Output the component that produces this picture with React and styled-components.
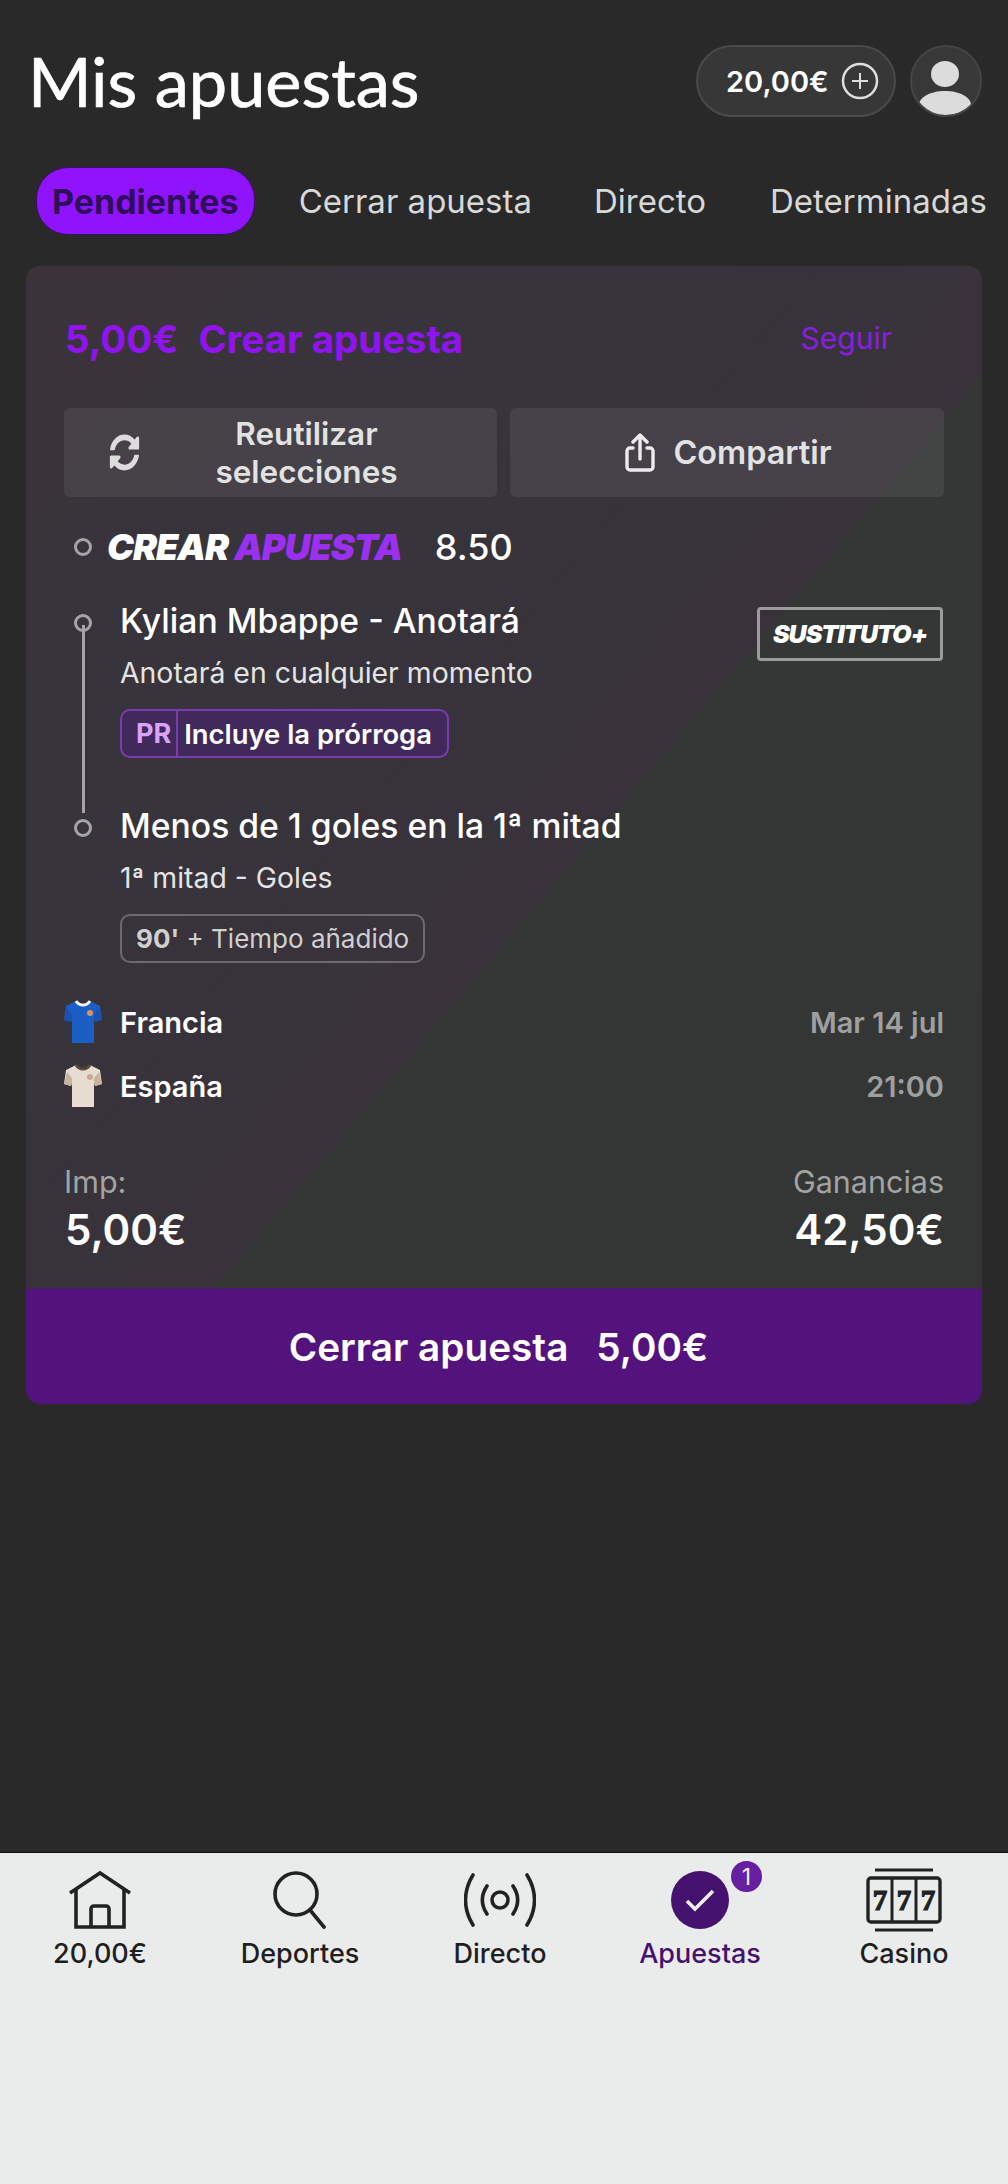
import React from "react";
import styled, { createGlobalStyle } from "styled-components";
import { FaSyncAlt } from "react-icons/fa";

const GlobalStyle = createGlobalStyle`
   html, body {
      margin: 0;
      padding: 0;
      background: #292929;
   }
   * {
      box-sizing: border-box;
   }
`;

const Page = styled.div`
   width: 1008px;
   height: 2184px;
   display: flex;
   flex-direction: column;
   background: #292929;
   font-family: "Inter", "Liberation Sans", sans-serif;
   color: #fff;
   overflow: hidden;
`;

const Main = styled.main`
   flex: 1;
   padding: 44px 26px 0 26px;
`;

const Header = styled.header`
   display: flex;
   justify-content: space-between;
   align-items: center;
   height: 74px;
`;

const Title = styled.h1`
   margin: 0 0 0 2px;
   font-family: "Lato", sans-serif;
   font-size: 68.5px;
   font-weight: 400;
   line-height: 74px;
   color: #fff;
   -webkit-text-stroke: 0.7px #fff;
`;

const Account = styled.div`
   display: flex;
   align-items: center;
   gap: 14px;
`;

const Balance = styled.div`
   width: 200px;
   height: 72px;
   padding-left: 28px;
   display: flex;
   align-items: center;
   gap: 12px;
   border: 2px solid #4a4a4a;
   border-radius: 36px;
   background: #373737;
   font-size: 29px;
   font-weight: 600;
`;

const Avatar = styled.div`
   width: 72px;
   height: 72px;
   border: 2px solid #454545;
   border-radius: 50%;
   background: #383838;
   overflow: hidden;
`;

const Tabs = styled.nav`
   display: flex;
   align-items: center;
   margin: 49px -26px 0 10px;
   white-space: nowrap;
`;

const Tab = styled.span`
   height: 68px;
   display: flex;
   align-items: center;
   padding: ${(props) => (props.$active ? "0 15px" : "0")};
   margin-right: ${(props) => props.$gap}px;
   border-radius: 32px;
   border: ${(props) => (props.$active ? "1px solid #3a1060" : "none")};
   background: ${(props) => (props.$active ? "#9013fe" : "transparent")};
   color: ${(props) => (props.$active ? "#2f0f57" : "#d8d8d8")};
   font-size: ${(props) => (props.$active ? 34 : 33)}px;
   font-weight: ${(props) => (props.$active ? 700 : 400)};
`;

const Card = styled.section`
   margin-top: 31px;
   width: 956px;
   border-radius: 14px;
   overflow: hidden;
`;

const CardBody = styled.div`
   height: 1022px;
   padding: 51px 38px 0 38px;
   background: linear-gradient(
      130deg,
      #3b3339 0%,
      #37343c 30%,
      #39323a 57.7%,
      #343736 57.8%,
      #333635 100%
   );
`;

const CardTop = styled.div`
   display: flex;
   justify-content: space-between;
   align-items: center;
   height: 44px;
   padding-right: 52px;
`;

const Stake = styled.div`
   display: flex;
   gap: 20px;
   margin-left: 1px;
   color: #9013f0;
   font-size: 38.4px;
   font-weight: 700;
`;

const Follow = styled.span`
   margin-bottom: 3px;
   color: #8a1ee0;
   font-size: 30px;
   font-weight: 400;
`;

const Actions = styled.div`
   display: grid;
   grid-template-columns: 433px 434px;
   gap: 13px;
   margin-top: 47px;
`;

const ActionButton = styled.div`
   height: 89px;
   display: flex;
   align-items: center;
   justify-content: center;
   gap: ${(props) => (props.$wide ? 12 : 17)}px;
   border-radius: 6px;
   padding: ${(props) => (props.$wide ? "0 39px 0 42px" : "0 0 0 2px")};
   background: rgba(255, 255, 255, 0.07);
   color: #e2e2e2;
   font-size: ${(props) => (props.$wide ? 31.5 : 32.4)}px;
   font-weight: 600;
   line-height: 38px;
   text-align: center;

   svg {
      flex-shrink: 0;
   }
`;

const ActionText = styled.span`
   flex: 1;
`;

const SyncIcon = styled(FaSyncAlt)`
   transform: scaleX(0.82);
`;

const Timeline = styled.div`
   display: flex;
   align-items: center;
   margin-top: 30px;
   height: 40px;
`;

const Dot = styled.span`
   width: 18px;
   height: 18px;
   flex-shrink: 0;
   border: 3px solid #a5a5a5;
   border-radius: 50%;
   background: transparent;
`;

const BrandRow = styled.div`
   display: flex;
   align-items: center;
   margin-left: 10px;
   gap: 15px;
`;

const Brand = styled.span`
   font-size: 36px;
   font-weight: 900;
   font-style: italic;
   letter-spacing: -1px;
   color: ${(props) => props.$color || "#fff"};
`;

const Odds = styled.span`
   margin-left: 18px;
   font-size: 36px;
   font-weight: 500;
`;

const Legs = styled.div`
   position: relative;
   margin-top: 31px;
`;

const Line = styled.span`
   position: absolute;
   left: 17.5px;
   top: 27px;
   width: 3px;
   height: 188px;
   background: #a5a5a5;
`;

const Leg = styled.div`
   position: relative;
   display: flex;
   gap: 28px;
   padding-left: 10px;
   height: ${(props) => props.$height}px;
`;

const LegDot = styled(Dot)`
   margin-top: 16px;
`;

const LegBody = styled.div`
   flex: 1;
   display: flex;
   flex-direction: column;
   align-items: flex-start;
`;

const LegTitle = styled.div`
   font-size: 33.7px;
   font-weight: 500;
   line-height: 46px;
`;

const LegSub = styled.div`
   margin-top: 9px;
   font-size: 28.4px;
   font-weight: 400;
   line-height: 40px;
   color: #e4e4e4;
`;

const Badge = styled.div`
   display: flex;
   align-items: center;
   height: 49px;
   margin-top: 16px;
   border: 2px solid ${(props) => (props.$purple ? "#7a3cb0" : "#6b6b6b")};
   border-radius: 10px;
   background: ${(props) => (props.$purple ? "#42295c" : "transparent")};
   font-size: 26px;
   overflow: hidden;
`;

const BadgeCode = styled.span`
   height: 100%;
   display: flex;
   align-items: center;
   padding: 0 5px 0 14px;
   border-right: 2px solid #7a3cb0;
   color: #d9a3f7;
   font-size: 27px;
   font-weight: 700;
`;

const BadgeText = styled.span`
   padding: 0 15px 0 6px;
   font-size: 27.4px;
   font-weight: 600;
   color: #fff;
`;

const PlainBadgeText = styled.span`
   padding: 0 14px;
   font-weight: 400;
   color: #d0d0d0;

   b {
      font-weight: 700;
   }
`;

const Sustituto = styled.div`
   position: absolute;
   right: 1px;
   top: 9px;
   width: 186px;
   height: 54px;
   display: flex;
   align-items: center;
   justify-content: center;
   border: 3px solid #9b9b9b;
   border-radius: 4px;
   font-size: 25px;
   font-weight: 900;
   font-style: italic;
   letter-spacing: -1px;
`;

const Match = styled.div`
   display: flex;
   flex-direction: column;
   gap: 24px;
   margin-top: 16px;
`;

const MatchRow = styled.div`
   display: flex;
   align-items: center;
   height: 40px;
`;

const Team = styled.span`
   flex: 1;
   margin-left: 18px;
   font-size: 29px;
   font-weight: 600;
`;

const When = styled.span`
   font-size: 29px;
   font-weight: 600;
   color: #9f9f9f;
`;

const Totals = styled.div`
   display: flex;
   justify-content: space-between;
   margin-top: 58px;
`;

const Total = styled.div`
   display: flex;
   flex-direction: column;
   align-items: ${(props) => (props.$right ? "flex-end" : "flex-start")};
   gap: 3px;
`;

const TotalLabel = styled.span`
   font-size: 30.5px;
   line-height: 36px;
   color: #a3a3a3;
`;

const TotalValue = styled.span`
   font-size: 42px;
   font-weight: 600;
   line-height: 54px;
   margin-left: 1px;
`;

const CloseBar = styled.div`
   height: 116px;
   display: flex;
   align-items: center;
   justify-content: center;
   gap: 28px;
   padding-right: 11px;
   border-top: 2px solid #4b1a6e;
   background: #53127c;
   font-size: 38.7px;
   font-weight: 600;
`;

const BottomNav = styled.nav`
   height: 332px;
   display: grid;
   grid-template-columns: 200px 200px 200px 200px 208px;
   padding: 10px 0 0 0;
   margin: 0;
   border-top: 1px solid #111;
   background: #eaecec;
`;

const NavItem = styled.div`
   position: relative;
   display: flex;
   flex-direction: column;
   align-items: center;
   color: ${(props) => (props.$active ? "#45136f" : "#1f1f1f")};
   font-size: 27px;
   font-weight: 500;
`;

const NavIcon = styled.div`
   height: 73px;
   display: flex;
   align-items: center;
   justify-content: center;
`;

const NavLabel = styled.span`
   line-height: 32px;
   margin-top: 2px;
`;

const CheckCircle = styled.div`
   width: 58px;
   height: 58px;
   display: flex;
   align-items: center;
   justify-content: center;
   border-radius: 50%;
   background: #45136f;
`;

const CountBubble = styled.span`
   position: absolute;
   top: -2px;
   left: 131px;
   width: 31px;
   height: 31px;
   display: flex;
   align-items: center;
   justify-content: center;
   border-radius: 50%;
   background: #651fa0;
   color: #eee;
   font-size: 23px;
   font-weight: 400;
`;

const PlusIcon = () => (
   <svg width="38" height="38" viewBox="0 0 38 38" fill="none" stroke="#dedede">
      <circle cx="19" cy="19" r="17" strokeWidth="2.5" />
      <path d="M19 11v16M11 19h16" strokeWidth="2" />
   </svg>
);

const UserIcon = () => (
   <svg width="68" height="68" viewBox="0 0 68 68" fill="#dcdcdc">
      <ellipse cx="33" cy="27" rx="14" ry="13" />
      <path d="M7 58c0-8 12-14 26-14s26 6 26 14c-6 6-15 10-26 10S13 64 7 58z" />
   </svg>
);

const ShareIcon = () => (
   <svg width="32" height="40" viewBox="0 0 32 40" fill="none" stroke="#ececec" strokeWidth="3.4" strokeLinecap="round" strokeLinejoin="round">
      <path d="M9 15H6a3 3 0 0 0-3 3v16a3 3 0 0 0 3 3h20a3 3 0 0 0 3-3V18a3 3 0 0 0-3-3h-3" />
      <path d="M16 26V3M9 9l7-7 7 7" />
   </svg>
);

const Shirt = ({ body, collar, sleeve, crest }) => (
   <svg width="38" height="44" viewBox="0 0 38 44">
      <path
         d="M12 1 2 6 0 20l7 2 1-4v25h22V18l1 4 7-2-2-14-10-5c-2 3-5 4-7 4s-5-1-7-4z"
         fill={body}
      />
      <path d="M0 20l7 2 1-4V14L3 8zM38 20l-7 2-1-4V14l5-6z" fill={sleeve} />
      <path
         d="M12 1c2 3 5 4 7 4s5-1 7-4"
         fill="none"
         stroke={collar}
         strokeWidth="3"
      />
      <circle cx="26" cy="13" r="3" fill={crest} />
   </svg>
);

const HomeIcon = () => (
   <svg width="64" height="60" viewBox="0 0 64 60" fill="none" stroke="#222" strokeWidth="3.6">
      <path d="M2 23 32 3l30 20" />
      <path d="M8 19v38h48V19" />
      <path d="M23 57V39a3 3 0 0 1 3-3h12a3 3 0 0 1 3 3v18" />
   </svg>
);

const SearchIcon = () => (
   <svg width="56" height="58" viewBox="0 0 56 58" fill="none" stroke="#222" strokeWidth="3.6">
      <circle cx="24" cy="23" r="21" />
      <path d="M38 39l14 17" strokeLinecap="round" />
   </svg>
);

const LiveIcon = () => (
   <svg width="72" height="56" viewBox="0 0 72 56" fill="none" stroke="#222" strokeWidth="3.6" strokeLinecap="round">
      <circle cx="36" cy="28" r="8" />
      <path d="M23 14c-6 9-6 19 0 28M49 14c6 9 6 19 0 28" />
      <path d="M9 3C-1 19-1 37 9 53M63 3c10 16 10 34 0 50" />
   </svg>
);

const CheckIcon = () => (
   <svg width="32" height="26" viewBox="0 0 32 26" fill="none" stroke="#f0f0f0" strokeWidth="3.6">
      <path d="M3 14l8 8L29 4" />
   </svg>
);

const Seven = ({ x }) => (
   <text
      x={x}
      y="42"
      fill="#222"
      stroke="#222"
      strokeWidth="1.2"
      textAnchor="middle"
      fontFamily="Liberation Serif, serif"
      fontWeight="700"
      fontSize="29"
   >
      7
   </text>
);

const CasinoIcon = () => (
   <svg width="76" height="64" viewBox="0 0 76 64" fill="none" stroke="#222" strokeWidth="3">
      <path d="M9 2h58M9 62h58" />
      <rect x="2" y="10" width="72" height="44" rx="3" strokeWidth="3.4" />
      <path d="M26 10v44M50 10v44" />
      <Seven x={14} />
      <Seven x={38} />
      <Seven x={62} />
   </svg>
);

const App = () => {
   return (
      <Page>
         <GlobalStyle />
         <Main>
            <Header>
               <Title>Mis apuestas</Title>
               <Account>
                  <Balance>
                     20,00€
                     <PlusIcon />
                  </Balance>
                  <Avatar>
                     <UserIcon />
                  </Avatar>
               </Account>
            </Header>
            <Tabs>
               <Tab $active $gap={44}>Pendientes</Tab>
               <Tab $gap={62}>Cerrar apuesta</Tab>
               <Tab $gap={64}>Directo</Tab>
               <Tab $gap={0}>Determinadas</Tab>
            </Tabs>
            <Card>
               <CardBody>
                  <CardTop>
                     <Stake>
                        <span>5,00€</span>
                        <span>Crear apuesta</span>
                     </Stake>
                     <Follow>Seguir</Follow>
                  </CardTop>
                  <Actions>
                     <ActionButton $wide>
                        <SyncIcon size={37} color="#dcdcdc" />
                        <ActionText>
                           Reutilizar
                           <br />
                           selecciones
                        </ActionText>
                     </ActionButton>
                     <ActionButton>
                        <ShareIcon />
                        Compartir
                     </ActionButton>
                  </Actions>
                  <Timeline>
                     <BrandRow>
                        <Dot />
                        <span>
                           <Brand>CREAR </Brand>
                           <Brand $color="#9b30f0">APUESTA</Brand>
                        </span>
                        <Odds>8.50</Odds>
                     </BrandRow>
                  </Timeline>
                  <Legs>
                     <Line />
                     <Leg $height={205}>
                        <LegDot />
                        <LegBody>
                           <LegTitle>Kylian Mbappe - Anotará</LegTitle>
                           <LegSub>Anotará en cualquier momento</LegSub>
                           <Badge $purple>
                              <BadgeCode>PR</BadgeCode>
                              <BadgeText>Incluye la prórroga</BadgeText>
                           </Badge>
                        </LegBody>
                        <Sustituto>SUSTITUTO+</Sustituto>
                     </Leg>
                     <Leg $height={183}>
                        <LegDot />
                        <LegBody>
                           <LegTitle>Menos de 1 goles en la 1ª mitad</LegTitle>
                           <LegSub>1ª mitad - Goles</LegSub>
                           <Badge>
                              <PlainBadgeText>
                                 <b>90'</b> + Tiempo añadido
                              </PlainBadgeText>
                           </Badge>
                        </LegBody>
                     </Leg>
                  </Legs>
                  <Match>
                     <MatchRow>
                        <Shirt body="#1b5fc4" collar="#f2f2f2" sleeve="#1a52ad" crest="#d9926a" />
                        <Team>Francia</Team>
                        <When>Mar 14 jul</When>
                     </MatchRow>
                     <MatchRow>
                        <Shirt body="#e6dccf" collar="#5a4536" sleeve="#c9b4a0" crest="#c9a78e" />
                        <Team>España</Team>
                        <When>21:00</When>
                     </MatchRow>
                  </Match>
                  <Totals>
                     <Total>
                        <TotalLabel>Imp:</TotalLabel>
                        <TotalValue>5,00€</TotalValue>
                     </Total>
                     <Total $right>
                        <TotalLabel>Ganancias</TotalLabel>
                        <TotalValue>42,50€</TotalValue>
                     </Total>
                  </Totals>
               </CardBody>
               <CloseBar>
                  <span>Cerrar apuesta</span>
                  <span>5,00€</span>
               </CloseBar>
            </Card>
         </Main>
         <BottomNav>
            <NavItem>
               <NavIcon><HomeIcon /></NavIcon>
               <NavLabel>20,00€</NavLabel>
            </NavItem>
            <NavItem>
               <NavIcon><SearchIcon /></NavIcon>
               <NavLabel>Deportes</NavLabel>
            </NavItem>
            <NavItem>
               <NavIcon><LiveIcon /></NavIcon>
               <NavLabel>Directo</NavLabel>
            </NavItem>
            <NavItem $active>
               <NavIcon>
                  <CheckCircle><CheckIcon /></CheckCircle>
               </NavIcon>
               <NavLabel>Apuestas</NavLabel>
               <CountBubble>1</CountBubble>
            </NavItem>
            <NavItem>
               <NavIcon><CasinoIcon /></NavIcon>
               <NavLabel>Casino</NavLabel>
            </NavItem>
         </BottomNav>
      </Page>
   );
};

export default App;
